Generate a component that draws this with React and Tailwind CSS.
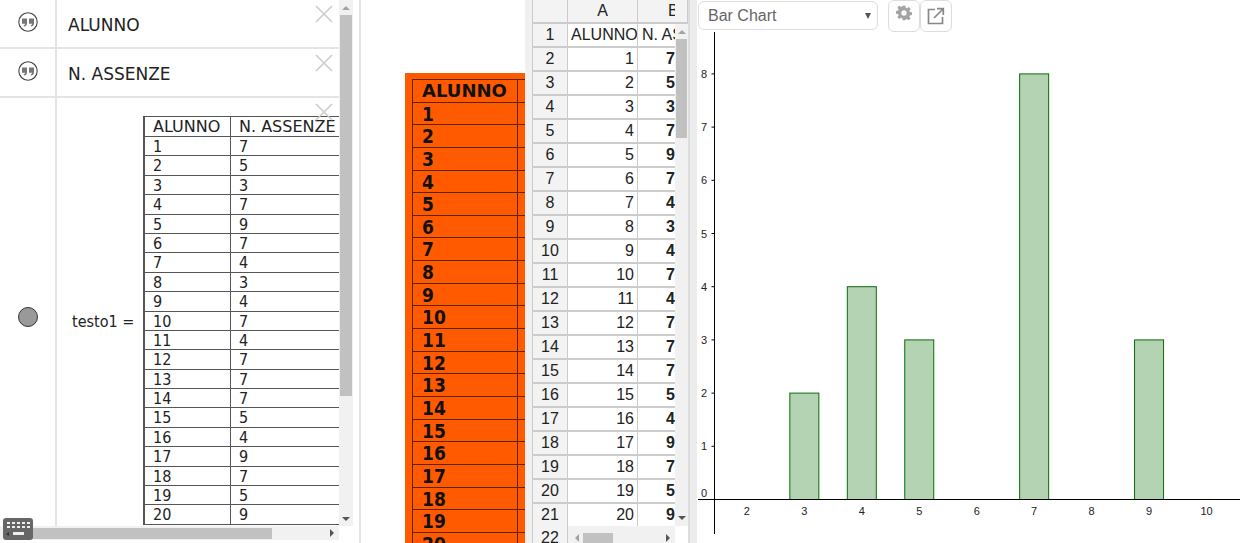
import React from 'react';

const assenze = [7, 5, 3, 7, 9, 7, 4, 3, 4, 7, 4, 7, 7, 7, 5, 4, 9, 7, 5, 9];
const bars = [[3, 2], [4, 4], [5, 3], [7, 8], [9, 3]];

const sx = (v) => 632 + v * 57.45;
const sy = (v) => 499.5 - v * 53.2;

const QuoteIcon = () => (
  <svg width="20" height="20" viewBox="0 0 20 20">
    <circle cx="10" cy="10" r="9.2" fill="#fff" stroke="#444" strokeWidth="1.1" />
    <path d="M4 6.5h5v4.7c0 1.9-1 3-2.9 3.4l-.5-1.1c.9-.3 1.4-.9 1.4-1.7H4zM11 6.5h5v4.7c0 1.9-1 3-2.9 3.4l-.5-1.1c.9-.3 1.4-.9 1.4-1.7H11z" fill="#777" />
  </svg>
);

const CloseIcon = ({ className }) => (
  <svg width="18" height="18" viewBox="0 0 18 18" className={`absolute ${className}`}>
    <path d="M1 1l16 16M17 1L1 17" stroke="#ccc" strokeWidth="1.6" />
  </svg>
);

const AlgebraRow = ({ text }) => (
  <div className="flex h-[49px] border-b-2 border-[#e4e4e4]">
    <div className="flex w-[57px] justify-center border-r-2 border-[#e4e4e4] pt-[12px]">
      <QuoteIcon />
    </div>
    <div className="pl-[11px] pt-[15px] text-[17px] leading-[20px] text-[#222]">{text}</div>
  </div>
);

const Algebra = () => (
  <div className="relative flex h-full w-[361px] shrink-0 border-r-2 border-[#e4e4e4] font-['DejaVu_Sans',sans-serif]">
    <div className="flex h-full w-[339px] shrink-0 flex-col overflow-hidden">
      <AlgebraRow text="ALUNNO" />
      <AlgebraRow text="N. ASSENZE" />
      <div className="flex h-[428px] shrink-0">
        <div className="flex w-[57px] shrink-0 items-center justify-center border-r-2 border-[#e4e4e4] pt-[10px]">
          <div className="h-5 w-5 rounded-full border border-[#333] bg-[#999]" />
        </div>
        <div className="flex items-center pl-[15px] pt-[20px] text-[16px] text-[#222]">
          <span className="w-[71px] whitespace-nowrap font-['DejaVu_Sans_Condensed','DejaVu_Sans',sans-serif]">testo1 =</span>
        </div>
        <div className="pt-[18px]">
          <div className="grid w-[200px] grid-cols-[86px_114px] border-l-2 border-t border-[#555] text-[16px] leading-[19px] text-[#222]">
            <div className="h-[20px] border-b border-r border-[#555] pl-[8px]">ALUNNO</div>
            <div className="h-[20px] whitespace-nowrap border-b border-[#555] pl-[8px]">N. ASSENZE</div>
            {assenze.map((n, i) => (
              <React.Fragment key={i}>
                <div className="h-[19.4px] border-b border-r border-[#555] pl-[8px] font-['DejaVu_Sans_Condensed','DejaVu_Sans',sans-serif]">{i + 1}</div>
                <div className="h-[19.4px] border-b border-[#555] pl-[8px] font-['DejaVu_Sans_Condensed','DejaVu_Sans',sans-serif]">{n}</div>
              </React.Fragment>
            ))}
          </div>
        </div>
      </div>
      <div className="flex h-[14px] shrink-0 items-center bg-[#f1f1f1]">
        <div className="ml-[6px] h-[11px] w-[266px] bg-[#c1c1c1]" />
        <div className="ml-auto mr-[5px] h-0 w-0 border-y-[4px] border-l-[4px] border-y-transparent border-l-[#555]" />
      </div>
    </div>
    <div className="flex h-[526px] w-[14px] shrink-0 flex-col items-center bg-[#f1f1f1]">
      <div className="mt-[6px] h-0 w-0 border-x-[4px] border-b-[4px] border-x-transparent border-b-[#a3a3a3]" />
      <div className="mt-[5px] h-[381px] w-[12px] bg-[#c1c1c1]" />
      <div className="mt-auto mb-[5px] h-0 w-0 border-x-[4px] border-t-[4px] border-x-transparent border-t-[#555]" />
    </div>
    <CloseIcon className="left-[315px] top-[5px]" />
    <CloseIcon className="left-[315px] top-[54px]" />
    <CloseIcon className="left-[315px] top-[103px]" />
    <div className="absolute left-[3px] top-[518px] flex h-[22px] w-[30px] flex-col items-center rounded-[3px] bg-[#666] pt-[4px]">
      <svg width="24" height="15" viewBox="0 0 24 15">
        <path d="M1 0h3v2H1zM6 0h3v2H6zM11 0h3v2h-3zM16 0h3v2h-3zM21 0h3v2h-3zM1 4h3v2H1zM6 4h3v2H6zM11 4h3v2h-3zM16 4h3v2h-3zM21 4h3v2h-3zM7 10h11v3H7z" fill="#eee" />
        <path d="M0 12l3-2v4z" fill="#333" />
      </svg>
    </div>
  </div>
);

const OrangeTable = () => (
  <div className="h-full w-[164px] shrink-0 overflow-hidden pl-[44px] pt-[73px]">
    <div className="h-[470px] bg-[#ff5a00] pl-[7px] pt-[6px]">
      <div className="grid grid-cols-[105px_10px] border-l border-t border-[#5a2500] font-['DejaVu_Sans',sans-serif] text-[18px] font-bold leading-[22px] text-[#111]">
        {['ALUNNO', ...assenze.map((_, i) => i + 1)].map((label) => (
          <React.Fragment key={label}>
            <div className={`h-[22.65px] border-b border-r border-[#5a2500] pl-[9px] ${label === 'ALUNNO' ? '' : "font-['DejaVu_Sans_Condensed','DejaVu_Sans',sans-serif] text-[19px]"}`}>{label}</div>
            <div className="h-[22.65px] border-b border-[#5a2500]" />
          </React.Fragment>
        ))}
      </div>
    </div>
  </div>
);

const Spreadsheet = () => (
  <div className="flex h-full w-[165px] shrink-0 border-r-2 border-[#ddd] bg-[#f0f0f0] pl-[7px] font-['Liberation_Sans',sans-serif] text-[16px] text-[#222]">
    <div className="relative h-full w-[156px] shrink-0 overflow-hidden bg-white">
      <div className="grid h-[24px] grid-cols-[36px_70px_50px] border-b-2 border-[#ccc] bg-[#f3f3f3] leading-[22px]">
        <div className="border-x border-[#ccc]" />
        <div className="border-r border-[#ccc] text-center">A</div>
        <div className="border-r border-[#ccc] pl-[30px]">
          <div className="w-[7px] overflow-hidden">B</div>
        </div>
      </div>
      <div className="flex h-[502px]">
        <div className="w-[143px] shrink-0 overflow-hidden">
          <div className="grid grid-cols-[36px_70px_37px] leading-[22px]">
            <div className="h-[24px] border-x border-b-2 border-[#ccc] bg-[#f3f3f3] text-center">1</div>
            <div className="h-[24px] overflow-hidden whitespace-nowrap border-r border-b-2 border-[#ccc] pl-[3px]">ALUNNO</div>
            <div className="h-[24px] overflow-hidden whitespace-nowrap border-b-2 border-[#ccc] pl-[4px]">N. ASSENZE</div>
            {assenze.map((n, i) => (
              <React.Fragment key={i}>
                <div className="h-[24px] border-x border-b-2 border-[#ccc] bg-[#f3f3f3] text-center">{i + 2}</div>
                <div className="h-[24px] border-r border-b-2 border-[#ccc] pr-[3px] text-right">{i + 1}</div>
                <div className="h-[24px] border-b-2 border-[#ccc] text-right font-bold">{n}</div>
              </React.Fragment>
            ))}
          </div>
        </div>
        <div className="flex w-[13px] shrink-0 flex-col items-center bg-[#f1f1f1]">
          <div className="mt-[6px] h-0 w-0 border-x-[4px] border-b-[4px] border-x-transparent border-b-[#a3a3a3]" />
          <div className="mt-[5px] h-[99px] w-[11px] bg-[#c1c1c1]" />
          <div className="mt-auto mb-[6px] h-0 w-0 border-x-[4px] border-t-[4px] border-x-transparent border-t-[#555]" />
        </div>
      </div>
      <div className="grid h-[17px] grid-cols-[36px_107px_13px] bg-white">
        <div className="border-x border-[#ccc] bg-[#f3f3f3] text-center leading-[24px]">22</div>
        <div className="flex items-center bg-[#f1f1f1]">
          <div className="ml-[7px] h-0 w-0 border-y-[4px] border-r-[4px] border-y-transparent border-r-[#a3a3a3]" />
          <div className="ml-[4px] h-[11px] w-[30px] bg-[#c1c1c1]" />
          <div className="ml-auto mr-[5px] h-0 w-0 border-y-[4px] border-l-[4px] border-y-transparent border-l-[#555]" />
        </div>
        <div />
      </div>
    </div>
  </div>
);

const Chart = () => (
  <svg className="absolute left-0 top-0" width="545" height="543" viewBox="697 0 545 543">
    {bars.map(([x, h]) => (
      <rect key={x} x={sx(x) - 14.5} y={sy(h)} width="29" height={h * 53.2} fill="#b3d3b3" stroke="#0a6b0a" strokeWidth="1" />
    ))}
    <path d="M714.5 32V534M698 499.5H1240" stroke="#000" strokeWidth="1" fill="none" />
    {[1, 2, 3, 4, 5, 6, 7, 8].map((v) => (
      <g key={v}>
        <path d={`M711.5 ${sy(v)}H714.5`} stroke="#000" />
        <text x="704" y={sy(v) + 4} fontSize="11" textAnchor="middle" fill="#222" fontFamily="Liberation Sans">{v}</text>
      </g>
    ))}
    <text x="704" y="497" fontSize="11" textAnchor="middle" fill="#222" fontFamily="Liberation Sans">0</text>
    {[2, 3, 4, 5, 6, 7, 8, 9, 10].map((v) => (
      <text key={v} x={sx(v)} y="515" fontSize="11" textAnchor="middle" fill="#222" fontFamily="Liberation Sans">{v}</text>
    ))}
  </svg>
);

const GraphPanel = () => (
  <div className="relative h-full flex-1 border-l-[7px] border-[#ececec] bg-white font-['Liberation_Sans',sans-serif]">
    <div className="relative h-full w-full">
      <Chart />
      <div className="absolute left-[1px] top-0 flex items-start">
        <div className="mt-[1px] flex h-[29px] w-[180px] items-center justify-between rounded-[6px] border border-[#ddd] bg-white pl-[9px] pr-[6px] text-[16px] text-[#666]">
          Bar Chart
          <span className="h-0 w-0 border-x-[3.5px] border-t-[6px] border-x-transparent border-t-[#555]" />
        </div>
        <div className="ml-[10px] flex h-[32px] w-[32px] items-start justify-center rounded-[6px] border border-[#ddd] pt-[4px]">
          <svg width="16" height="16" viewBox="0 0 24 24" fill="#a3a3a3">
            <path fillRule="evenodd" d="M10 1h4l.6 3.2 1.9.8 2.7-1.9 2.8 2.8-1.9 2.7.8 1.9 3.1.5v4l-3.2.6-.8 1.9 1.9 2.7-2.8 2.8-2.7-1.9-1.9.8L14 23h-4l-.6-3.2-1.9-.8-2.7 1.9L2 18.1l1.9-2.7-.8-1.9L0 13V9l3.2-.6.8-1.9L2 3.8 4.8 1l2.7 1.9 1.9-.8zM12 8a4 4 0 1 0 0 8 4 4 0 0 0 0-8z" />
          </svg>
        </div>
        <div className="flex h-[32px] w-[32px] items-center justify-center rounded-[6px] border border-[#ddd]">
          <svg width="18" height="18" viewBox="0 0 18 18" fill="none" stroke="#888" strokeWidth="1.7">
            <path d="M8 2.5H1.5v14h14V10" />
            <path d="M7 11L15.5 2.5M10 1.7h6.3V8" />
          </svg>
        </div>
      </div>
    </div>
  </div>
);

export default function App() {
  return (
    <div className="flex h-[543px] w-[1242px] overflow-hidden bg-white">
      <Algebra />
      <OrangeTable />
      <Spreadsheet />
      <GraphPanel />
    </div>
  );
}
